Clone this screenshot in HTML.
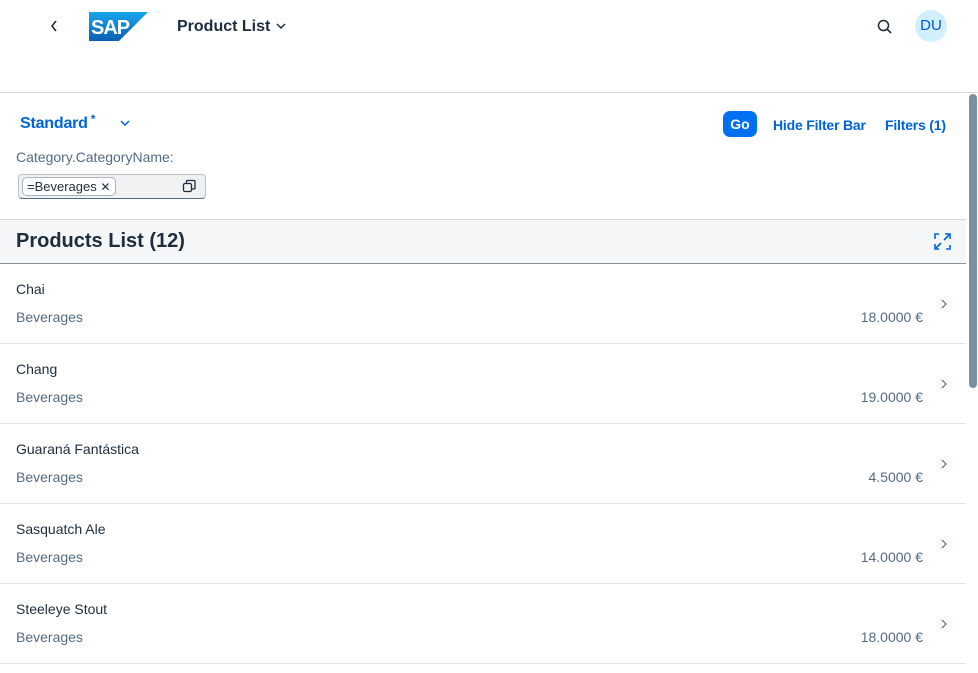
<!DOCTYPE html>
<html><head><meta charset="utf-8"><style>
*{box-sizing:border-box;margin:0;padding:0}
body{width:978px;height:673px;overflow:hidden;background:#fff;font-family:"Liberation Sans",Arial,sans-serif;color:#1d2d3e;position:relative}
.hdr{position:absolute;left:0;top:0;width:978px;height:93px;border-bottom:1px solid #d9d9d9;background:#fff}
.abs{position:absolute}
.link{color:#0064d9;font-weight:bold;font-size:14px;letter-spacing:-0.2px}
.row{position:absolute;left:0;width:966px;height:80px;border-bottom:1px solid #e5e5e5}
.row .t{position:absolute;left:16px;top:17px;font-size:14px;color:#1d2d3e}
.row .s{position:absolute;left:16px;top:45px;font-size:14px;color:#556b82}
.row .p{position:absolute;right:43px;top:45px;font-size:14px;color:#556b82}
.row svg{position:absolute;right:18px;top:34px}
</style></head><body>
<div class="hdr">
 <svg class="abs" style="left:49px;top:19px" width="10" height="14" viewBox="0 0 10 14"><path d="M7 2 L3 7 L7 12" stroke="#1d2d3e" stroke-width="1.6" fill="none"/></svg>
 <svg class="abs" style="left:89px;top:12px" width="59" height="29" viewBox="0 0 59 29"><defs><linearGradient id="g" x1="0" y1="0" x2="0" y2="1"><stop offset="0" stop-color="#1aa6ec"/><stop offset="1" stop-color="#0a5fb4"/></linearGradient></defs><path d="M0 0 H59 L30 29 H0 Z" fill="url(#g)"/><text x="2" y="22" font-family="Liberation Sans" font-weight="bold" font-size="20" fill="#fff" letter-spacing="-1">SAP</text></svg>
 <div class="abs" style="left:177px;top:18px;font-size:16px;font-weight:bold">Product List</div>
 <svg class="abs" style="left:275px;top:21px" width="12" height="10" viewBox="0 0 12 10"><path d="M2 3 L6 7 L10 3" stroke="#1d2d3e" stroke-width="1.5" fill="none"/></svg>
 <svg class="abs" style="left:876px;top:18px" width="18" height="18" viewBox="0 0 18 18"><circle cx="7.5" cy="7.5" r="5" stroke="#1d2d3e" stroke-width="1.5" fill="none"/><path d="M11 11 L15 15" stroke="#1d2d3e" stroke-width="1.6"/></svg>
 <div class="abs" style="left:915px;top:10px;width:32px;height:32px;border-radius:50%;background:#d1efff;color:#0057d2;font-size:15px;text-align:center;line-height:32px">DU</div>
</div>
<div class="abs link" style="left:20px;top:115px;font-size:16px;line-height:18px">Standard<span style="font-size:12px;position:relative;top:-5px;margin-left:3px">*</span></div>
<svg class="abs" style="left:119px;top:118px" width="12" height="10" viewBox="0 0 12 10"><path d="M2 3 L6 7 L10 3" stroke="#0064d9" stroke-width="1.5" fill="none"/></svg>
<div class="abs" style="left:723px;top:111px;width:34px;height:26px;border-radius:7px;background:#0070f2;color:#fff;font-weight:bold;font-size:14px;text-align:center;line-height:26px">Go</div>
<div class="abs link" style="left:773px;top:117px">Hide Filter Bar</div>
<div class="abs link" style="left:885px;top:117px">Filters (1)</div>
<div class="abs" style="left:16px;top:149px;font-size:14px;color:#556b82">Category.CategoryName:</div>
<div class="abs" style="left:18px;top:174px;width:188px;height:25px;background:#eff1f2;border:1px solid #bcc3ca;border-bottom:1px solid #556b82;border-radius:4px"></div>
<div class="abs" style="left:22px;top:177px;width:94px;height:19px;border:1px solid #a9b4be;border-radius:5px;background:#fff;font-size:13px;line-height:17px;padding-left:4px;color:#1d2d3e">=Beverages <span style="font-size:12px">✕</span></div>
<svg class="abs" style="left:182px;top:179px" width="15" height="15" viewBox="0 0 15 15"><rect x="1.5" y="4.5" width="8" height="8" rx="1.5" stroke="#1d2d3e" stroke-width="1.3" fill="none"/><path d="M4.5 4.5 V2.5 a1 1 0 0 1 1-1 H12 a1 1 0 0 1 1 1 V9 a1 1 0 0 1 -1 1 H9.5" stroke="#1d2d3e" stroke-width="1.3" fill="none"/></svg>
<div class="abs" style="left:0;top:219px;width:966px;height:45px;background:#f5f6f7;border-top:1px solid #d9d9d9;border-bottom:1px solid #8a9099"></div>
<div class="abs" style="left:16px;top:230px;font-size:20px;font-weight:bold">Products List (12)</div>
<svg class="abs" style="left:934px;top:233px" width="17" height="17" viewBox="0 0 17 17" fill="none" stroke="#0064d9" stroke-width="1.6"><path d="M1 6 V1 H5 M11 1 H16 V6 M16 12 V16 H12 M5 16 H1 V11 M10 7 L15 2 M7 10 L2 15"/></svg>
<div class="row" style="top:264px"><div class="t">Chai</div><div class="s">Beverages</div><div class="p">18.0000 €</div><svg width="8" height="12" viewBox="0 0 8 12"><path d="M2 2 L6 6 L2 10" stroke="#556b82" stroke-width="1.2" fill="none"/></svg></div>
<div class="row" style="top:344px"><div class="t">Chang</div><div class="s">Beverages</div><div class="p">19.0000 €</div><svg width="8" height="12" viewBox="0 0 8 12"><path d="M2 2 L6 6 L2 10" stroke="#556b82" stroke-width="1.2" fill="none"/></svg></div>
<div class="row" style="top:424px"><div class="t">Guaraná Fantástica</div><div class="s">Beverages</div><div class="p">4.5000 €</div><svg width="8" height="12" viewBox="0 0 8 12"><path d="M2 2 L6 6 L2 10" stroke="#556b82" stroke-width="1.2" fill="none"/></svg></div>
<div class="row" style="top:504px"><div class="t">Sasquatch Ale</div><div class="s">Beverages</div><div class="p">14.0000 €</div><svg width="8" height="12" viewBox="0 0 8 12"><path d="M2 2 L6 6 L2 10" stroke="#556b82" stroke-width="1.2" fill="none"/></svg></div>
<div class="row" style="top:584px"><div class="t">Steeleye Stout</div><div class="s">Beverages</div><div class="p">18.0000 €</div><svg width="8" height="12" viewBox="0 0 8 12"><path d="M2 2 L6 6 L2 10" stroke="#556b82" stroke-width="1.2" fill="none"/></svg></div>
<div class="abs" style="left:969px;top:94px;width:8px;height:294px;border-radius:4px;background:#7b8fa3"></div>
</body></html>
